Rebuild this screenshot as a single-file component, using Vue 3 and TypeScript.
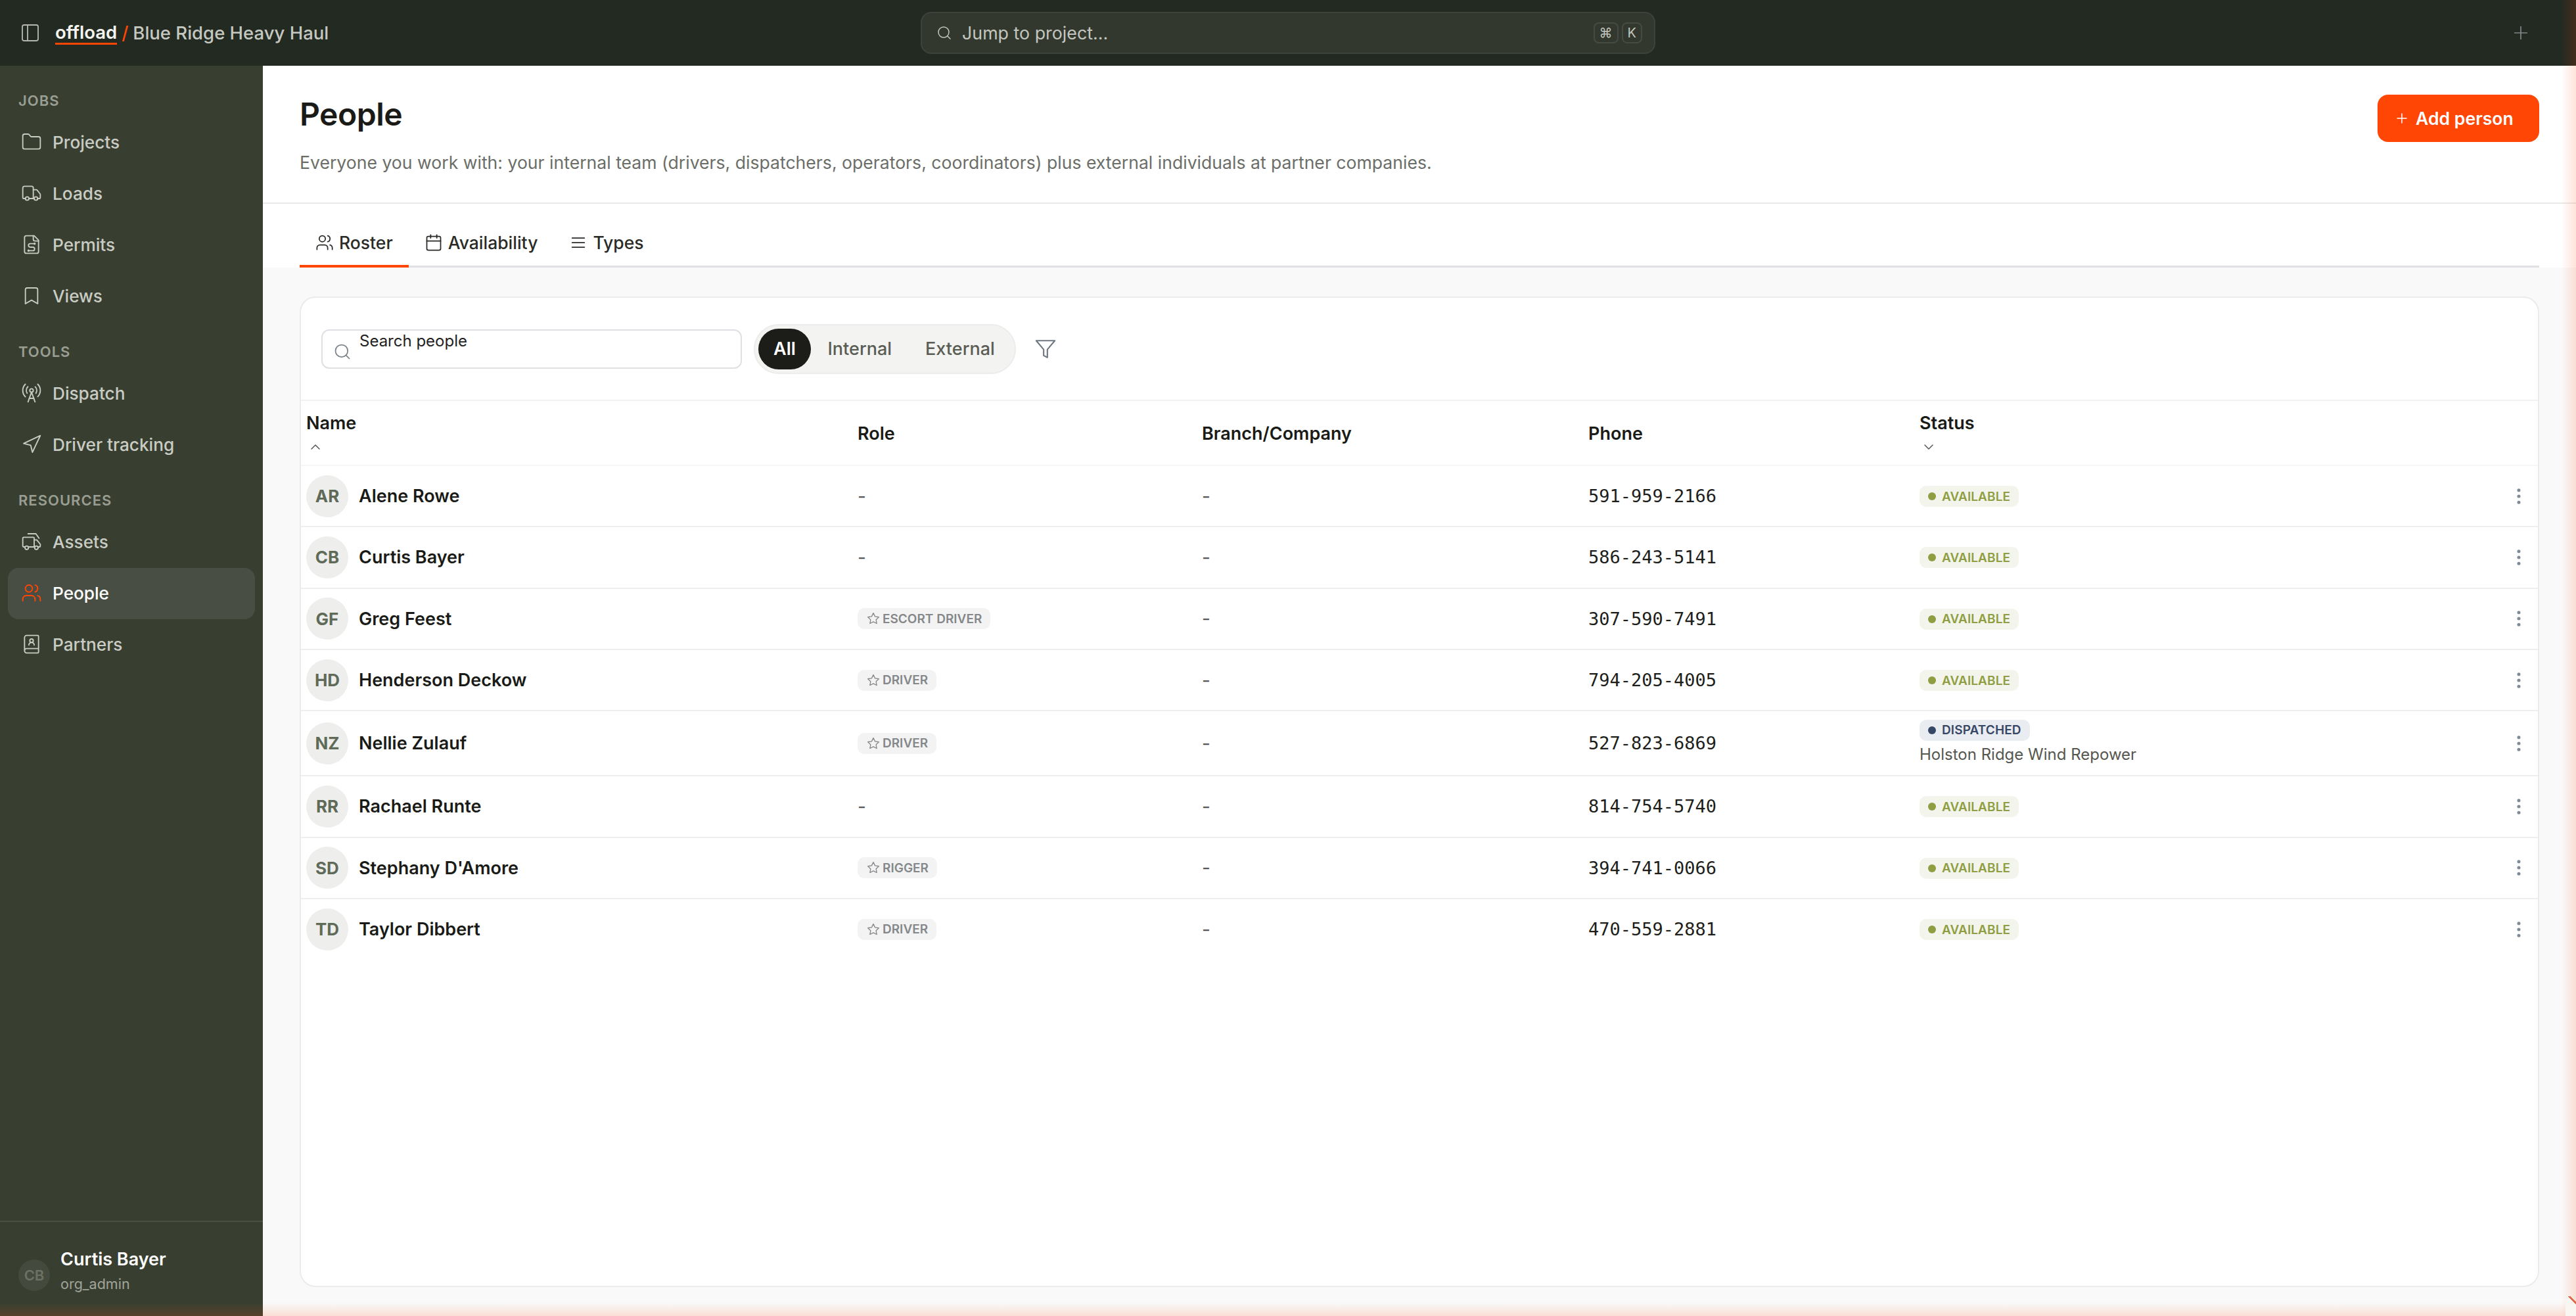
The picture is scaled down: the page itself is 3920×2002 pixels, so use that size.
<script setup lang="ts">
const circ = (cx: number, cy: number, r: number): string =>
  `M${cx - r} ${cy}a${r} ${r} 0 1 0 ${2 * r} 0a${r} ${r} 0 1 0 ${-2 * r} 0`

const icons: Record<string, string[]> = {
  panel: ['M5 3h14a2 2 0 0 1 2 2v14a2 2 0 0 1-2 2H5a2 2 0 0 1-2-2V5a2 2 0 0 1 2-2Z', 'M9 3v18'],
  folder: ['M20 20a2 2 0 0 0 2-2V8a2 2 0 0 0-2-2h-7.9a2 2 0 0 1-1.69-.9L9.6 3.9A2 2 0 0 0 7.93 3H4a2 2 0 0 0-2 2v13a2 2 0 0 0 2 2Z'],
  truck: ['M14 18V6a2 2 0 0 0-2-2H4a2 2 0 0 0-2 2v11a1 1 0 0 0 1 1h2', 'M15 18H9', 'M19 18h2a1 1 0 0 0 1-1v-3.65a1 1 0 0 0-.22-.624l-3.48-4.35A1 1 0 0 0 17.52 8H14', circ(17, 18, 2), circ(7, 18, 2)],
  permit: ['M15 2H6a2 2 0 0 0-2 2v16a2 2 0 0 0 2 2h12a2 2 0 0 0 2-2V7Z', 'M14 2v4a2 2 0 0 0 2 2h4', 'M15 11h-4.5a2 2 0 0 0 0 4h3a2 2 0 0 1 0 4H9', circ(15.5, 11, .6), circ(8.5, 19, .6)],
  bookmark: ['m19 21-7-4-7 4V5a2 2 0 0 1 2-2h10a2 2 0 0 1 2 2v16z'],
  tower: ['M4.9 16.1C1 12.2 1 5.8 4.9 1.9', 'M7.8 4.7a6.14 6.14 0 0 0-.8 7.5', circ(12, 9, 2), 'M16.2 4.8c2 2 2.26 5.11.8 7.47', 'M19.1 1.9a9.96 9.96 0 0 1 0 14.1', 'M9.5 18h5', 'm8 22 4-11 4 11'],
  nav: ['M3 11 22 2l-9 19-2-8-8-2Z'],
  asset: ['M4.5 18H3a1 1 0 0 1-1-1V8a1 1 0 0 1 1-1h11a1 1 0 0 1 1 1v10H9', 'M15 10h3l4 5v2a1 1 0 0 1-1 1h-1', 'M8 3h9l3.5 5', 'M15 18h.5', circ(6.5, 19, 2), circ(17.5, 19, 2)],
  users: ['M16 21v-2a4 4 0 0 0-4-4H6a4 4 0 0 0-4 4v2', circ(9, 7, 4), 'M22 21v-2a4 4 0 0 0-3-3.87', 'M16 3.13a4 4 0 0 1 0 7.75'],
  partner: ['M4 19.5v-15A2.5 2.5 0 0 1 6.5 2H19a1 1 0 0 1 1 1v18a1 1 0 0 1-1 1H6.5a1 1 0 0 1 0-5H20', circ(12, 8, 2), 'M15 13a3 3 0 1 0-6 0'],
  calendar: ['M8 2v4', 'M16 2v4', 'M5 4h14a2 2 0 0 1 2 2v14a2 2 0 0 1-2 2H5a2 2 0 0 1-2-2V6a2 2 0 0 1 2-2Z', 'M3 10h18'],
  menu: ['M4 6h16', 'M4 12h16', 'M4 18h16'],
  search: [circ(11, 11, 8), 'm21 21-4.3-4.3'],
  filter: ['M22 3H2l8 9.46V19l4 2v-8.54L22 3Z'],
  star: ['M12 2l3.09 6.26L22 9.27l-5 4.87 1.18 6.88L12 17.77l-6.18 3.25L7 14.14 2 9.27l6.91-1.01L12 2Z'],
  up: ['m18 15-6-6-6 6'],
  down: ['m6 9 6 6 6-6'],
  plus: ['M5 12h14', 'M12 5v14'],
  more: [circ(12, 5, 1), circ(12, 12, 1), circ(12, 19, 1)],
}

interface NavItem { label: string; icon: string; active?: boolean }
const groups: { title: string; items: NavItem[] }[] = [
  { title: 'JOBS', items: [
    { label: 'Projects', icon: 'folder' },
    { label: 'Loads', icon: 'truck' },
    { label: 'Permits', icon: 'permit' },
    { label: 'Views', icon: 'bookmark' },
  ] },
  { title: 'TOOLS', items: [
    { label: 'Dispatch', icon: 'tower' },
    { label: 'Driver tracking', icon: 'nav' },
  ] },
  { title: 'RESOURCES', items: [
    { label: 'Assets', icon: 'asset' },
    { label: 'People', icon: 'users', active: true },
    { label: 'Partners', icon: 'partner' },
  ] },
]

const tabs = [
  { label: 'Roster', icon: 'users', active: true },
  { label: 'Availability', icon: 'calendar' },
  { label: 'Types', icon: 'menu' },
]

interface Person { initials: string; name: string; role?: string; phone: string; project?: string }
const people: Person[] = [
  { initials: 'AR', name: 'Alene Rowe', phone: '591-959-2166' },
  { initials: 'CB', name: 'Curtis Bayer', phone: '586-243-5141' },
  { initials: 'GF', name: 'Greg Feest', role: 'ESCORT DRIVER', phone: '307-590-7491' },
  { initials: 'HD', name: 'Henderson Deckow', role: 'DRIVER', phone: '794-205-4005' },
  { initials: 'NZ', name: 'Nellie Zulauf', role: 'DRIVER', phone: '527-823-6869', project: 'Holston Ridge Wind Repower' },
  { initials: 'RR', name: 'Rachael Runte', phone: '814-754-5740' },
  { initials: 'SD', name: "Stephany D'Amore", role: 'RIGGER', phone: '394-741-0066' },
  { initials: 'TD', name: 'Taylor Dibbert', role: 'DRIVER', phone: '470-559-2881' },
]
</script>

<template>
  <div class="app">
    <header class="topbar">
      <div class="crumbs">
        <svg class="ic ic-panel" viewBox="0 0 24 24"><path v-for="d in icons.panel" :key="d" :d="d" /></svg>
        <span class="brand">offload</span>
        <span class="slash">/</span>
        <span class="org">Blue Ridge Heavy Haul</span>
      </div>
      <div class="jump">
        <svg class="ic ic-jump" viewBox="0 0 24 24"><path v-for="d in icons.search" :key="d" :d="d" /></svg>
        <span class="jump-text">Jump to project...</span>
        <span class="kbds"><kbd>⌘</kbd><kbd>K</kbd></span>
      </div>
      <svg class="ic ic-topplus" viewBox="0 0 24 24"><path v-for="d in icons.plus" :key="d" :d="d" /></svg>
    </header>

    <div class="body">
      <aside class="sidebar">
        <nav class="nav">
          <section v-for="g in groups" :key="g.title" class="group">
            <div class="group-title">{{ g.title }}</div>
            <a v-for="item in g.items" :key="item.label" class="nav-item" :class="{ active: item.active }">
              <svg class="ic ic-nav" viewBox="0 0 24 24"><path v-for="d in icons[item.icon]" :key="d" :d="d" /></svg>
              <span>{{ item.label }}</span>
            </a>
          </section>
        </nav>
        <div class="me">
          <div class="me-avatar">CB</div>
          <div class="me-text">
            <div class="me-name">Curtis Bayer</div>
            <div class="me-role">org_admin</div>
          </div>
        </div>
      </aside>

      <main class="main">
        <div class="head">
          <div class="head-text">
            <h1>People</h1>
            <p>Everyone you work with: your internal team (drivers, dispatchers, operators, coordinators) plus external individuals at partner companies.</p>
          </div>
          <button class="add">
            <svg class="ic ic-add" viewBox="0 0 24 24"><path v-for="d in icons.plus" :key="d" :d="d" /></svg>
            Add person
          </button>
        </div>

        <div class="tabs-wrap">
          <div class="tabs">
            <div v-for="t in tabs" :key="t.label" class="tab" :class="{ active: t.active }">
              <svg class="ic ic-tab" viewBox="0 0 24 24"><path v-for="d in icons[t.icon]" :key="d" :d="d" /></svg>
              <span>{{ t.label }}</span>
            </div>
          </div>
        </div>

        <div class="content">
          <div class="card">
            <div class="toolbar">
              <div class="search">
                <svg class="ic ic-search" viewBox="0 0 24 24"><path v-for="d in icons.search" :key="d" :d="d" /></svg>
                <span class="search-text">Search people</span>
              </div>
              <div class="seg">
                <span class="seg-btn on">All</span>
                <span class="seg-btn">Internal</span>
                <span class="seg-btn">External</span>
              </div>
              <svg class="ic ic-filter" viewBox="0 0 24 24"><path v-for="d in icons.filter" :key="d" :d="d" /></svg>
            </div>

            <div class="row thead">
              <div class="th">
                <span>Name</span>
                <svg class="ic ic-sort" viewBox="0 0 24 24"><path v-for="d in icons.up" :key="d" :d="d" /></svg>
              </div>
              <div class="th">Role</div>
              <div class="th">Branch/Company</div>
              <div class="th">Phone</div>
              <div class="th">
                <span>Status</span>
                <svg class="ic ic-sort" viewBox="0 0 24 24"><path v-for="d in icons.down" :key="d" :d="d" /></svg>
              </div>
            </div>

            <div v-for="p in people" :key="p.name" class="row person" :class="{ tall: p.project }">
              <div class="td cell-name">
                <div class="avatar">{{ p.initials }}</div>
                <span class="name">{{ p.name }}</span>
              </div>
              <div class="td">
                <span v-if="p.role" class="role">
                  <svg class="ic ic-star" viewBox="0 0 24 24"><path v-for="d in icons.star" :key="d" :d="d" /></svg>
                  {{ p.role }}
                </span>
                <span v-else class="dash">-</span>
              </div>
              <div class="td"><span class="dash">-</span></div>
              <div class="td phone">{{ p.phone }}</div>
              <div class="td cell-status">
                <div class="status-stack">
                  <span class="status" :class="p.project ? 'dispatched' : 'available'"><i class="dot"></i>{{ p.project ? 'DISPATCHED' : 'AVAILABLE' }}</span>
                  <span v-if="p.project" class="project">{{ p.project }}</span>
                </div>
                <svg class="ic ic-more" viewBox="0 0 24 24"><path v-for="d in icons.more" :key="d" :d="d" /></svg>
              </div>
            </div>
          </div>
        </div>
      </main>
    </div>

    <div class="glow glow-right"></div>
    <div class="glow glow-bottom"></div>
    <div class="corner"></div>
  </div>
</template>

<style scoped>
.app {
  position: relative;
  width: 3920px;
  height: 2002px;
  overflow: hidden;
  display: flex;
  flex-direction: column;
  font-family: Inter, "Liberation Sans", sans-serif;
  color: #1d1e1a;
  background: #f9f9f9;
}
.ic {
  fill: none;
  stroke: currentColor;
  stroke-width: 1.5;
  stroke-linecap: round;
  stroke-linejoin: round;
  flex: none;
}

/* top bar */
.topbar {
  height: 100px;
  flex: none;
  background: #232a21;
  display: grid;
  grid-template-columns: 1371px 1118px 1fr;
  align-items: center;
  padding: 0 72px 0 30px;
}
.crumbs {
  display: flex;
  align-items: center;
  font-size: 27.5px;
  font-weight: 500;
  color: #c5c8c1;
}
.ic-panel { width: 32px; height: 32px; color: #b3b7af; margin-right: 22px; stroke-width: 1.4; }
.brand {
  color: #f4f4f1;
  font-weight: 600;
  border-bottom: 3px solid #ff4605;
  line-height: 32px;
}
.slash { color: #ff4605; margin: 0 7px; }
.jump {
  height: 64px;
  box-sizing: border-box;
  display: flex;
  align-items: center;
  background: #32382e;
  border: 2px solid #3d433a;
  border-radius: 16px;
  padding: 0 18px 0 22px;
  color: #c3c6bf;
  font-size: 26.8px;
}
.ic-jump { width: 24px; height: 24px; margin-right: 15px; }
.jump-text { flex: 1; }
.kbds { display: flex; gap: 5px; }
kbd {
  font-family: Inter, "DejaVu Sans", sans-serif;
  font-size: 20px;
  height: 32px;
  min-width: 31px;
  padding: 0 7px;
  box-sizing: border-box;
  display: flex;
  align-items: center;
  justify-content: center;
  border: 2px solid #454b42;
  border-radius: 8px;
  color: #c3c6bf;
}
.ic-topplus { width: 32px; height: 32px; color: #80878a; justify-self: end; stroke-width: 1.3; margin-right: -4px; }

.body { flex: 1; display: flex; min-height: 0; }

/* sidebar */
.sidebar {
  width: 400px;
  flex: none;
  background: #393f30;
  display: flex;
  flex-direction: column;
}
.nav { flex: 1; padding: 38px 12px 0; display: flex; flex-direction: column; gap: 30px; }
.group-title {
  font-size: 22px;
  font-weight: 600;
  letter-spacing: 1px;
  line-height: 30px;
  padding-left: 16px;
  margin-bottom: 10px;
  color: #999e93;
}
.nav-item {
  height: 78px;
  box-sizing: border-box;
  display: flex;
  align-items: center;
  gap: 16px;
  padding: 0 0 2px 20px;
  border-radius: 16px;
  font-size: 26.2px;
  font-weight: 500;
  color: #c9ccc4;
}
.nav-item.active { background: #494e44; color: #fff; }
.nav-item.active .ic { color: #ff4605; }
.ic-nav { width: 32px; height: 32px; stroke-width: 1.4; }
.me {
  height: 145px;
  flex: none;
  box-sizing: border-box;
  border-top: 2px solid #4a4f41;
  display: flex;
  align-items: center;
  gap: 16px;
  padding: 6px 28px 0;
}
.me-avatar {
  width: 48px;
  height: 48px;
  border-radius: 50%;
  background: #444a3d;
  color: #6c7263;
  font-size: 22px;
  font-weight: 600;
  display: flex;
  align-items: center;
  justify-content: center;
  margin-top: 12px;
}
.me-name { font-size: 27px; font-weight: 600; color: #fff; line-height: 38px; }
.me-role { font-size: 21.5px; color: #a0a49b; line-height: 36px; }

/* main */
.main { flex: 1; min-width: 0; display: flex; flex-direction: column; background: #f9f9f9; }
.head {
  height: 210px;
  flex: none;
  box-sizing: border-box;
  background: #fff;
  border-bottom: 2px solid #e9e9e8;
  padding: 44px 56px 0;
  display: flex;
  justify-content: space-between;
  align-items: flex-start;
}
h1 { margin: 0; font-size: 48px; font-weight: 600; line-height: 60px; letter-spacing: -0.5px; color: #1a1b17; }
.head-text p { margin: 23px 0 0; font-size: 26.6px; line-height: 40px; color: #6b6e68; }
.add {
  height: 72px;
  width: 246px;
  box-sizing: border-box;
  border: 0;
  border-radius: 16px;
  background: #ff4605;
  color: #fff;
  font-family: inherit;
  font-size: 26.6px;
  font-weight: 600;
  display: flex;
  align-items: center;
  padding: 0 0 0 25px;
  gap: 9px;
}
.ic-add { width: 24px; height: 24px; }
.tabs-wrap { flex: none; height: 97px; background: #fff; padding: 0 56px; box-sizing: border-box; }
.tabs { height: 97px; box-sizing: border-box; border-bottom: 3px solid #dfe1e4; display: flex; }
.tab {
  height: 97px;
  box-sizing: border-box;
  padding: 25px 24px 0;
  border-bottom: 4px solid transparent;
  display: flex;
  align-items: center;
  gap: 8px;
  font-size: 26.5px;
  font-weight: 500;
  color: #2a2b26;
}
.tab.active { border-bottom-color: #ff4605; }
.ic-tab { width: 28px; height: 28px; }

.content { flex: 1; min-height: 0; padding: 44px 56px 44px; }
.card {
  height: 100%;
  box-sizing: border-box;
  background: #fff;
  border: 2px solid #ebebea;
  border-radius: 24px;
  overflow: hidden;
}
.toolbar {
  height: 157px;
  box-sizing: border-box;
  border-bottom: 2px solid #f1f1f0;
  display: flex;
  align-items: center;
  padding-left: 31px;
}
.search {
  width: 640px;
  height: 60px;
  box-sizing: border-box;
  border: 2px solid #dee0e4;
  border-radius: 12px;
  position: relative;
  display: flex;
  align-items: flex-start;
  padding-left: 56px;
}
.ic-search { position: absolute; left: 16px; top: 18px; width: 28px; height: 28px; color: #7a838a; }
.search-text { font-size: 24px; line-height: 32px; color: #222; }
.seg {
  margin-left: 18px;
  height: 76px;
  box-sizing: border-box;
  background: #f3f3f1;
  border: 2px solid #ececea;
  border-radius: 38px;
  padding: 5px;
  display: flex;
  align-items: center;
  font-size: 27px;
  font-weight: 500;
  color: #5a5d55;
}
.seg-btn { padding: 0 25.5px; height: 62px; display: flex; align-items: center; }
.seg-btn.on { background: #1c1c18; color: #fff; border-radius: 31px; font-weight: 600; padding: 0; width: 80px; box-sizing: border-box; justify-content: center; }
.ic-filter { width: 34px; height: 34px; margin-left: 28px; color: #6f7780; }

.row {
  display: grid;
  grid-template-columns: 839px 524px 588px 504px 1fr;
}
.thead { height: 97px; }
.th {
  padding: 1px 0 0 8px;
  font-size: 27px;
  font-weight: 600;
  color: #1a1b17;
  display: flex;
  flex-direction: column;
  justify-content: center;
  align-items: flex-start;
}
.ic-sort { width: 24px; height: 24px; margin: 8px 0 0 2px; color: #55585a; }
.person { height: 93.33px; box-sizing: border-box; border-top: 2px solid #eceef0; }
.person.tall { height: 99px; }
.thead + .person { border-top-color: #f6f6f5; }
.td { padding-left: 8px; display: flex; align-items: center; min-width: 0; }
.cell-name { gap: 16px; }
.avatar {
  width: 64px;
  height: 64px;
  flex: none;
  border-radius: 50%;
  background: #eeefed;
  color: #5f6b58;
  font-size: 26px;
  font-weight: 700;
  display: flex;
  align-items: center;
  justify-content: center;
}
.name { font-size: 27px; font-weight: 600; color: #1a1b17; }
.dash { font-size: 28px; color: #555; }
.role {
  height: 32px;
  box-sizing: border-box;
  background: #f3f3f3;
  border-radius: 10px;
  padding: 0 13px 0 14px;
  display: inline-flex;
  align-items: center;
  gap: 4px;
  font-size: 19px;
  font-weight: 600;
  color: #85888a;
}
.ic-star { width: 20px; height: 20px; stroke-width: 1.6; }
.phone { font-family: "DejaVu Sans Mono", monospace; font-size: 27px; color: #1d1e1a; }
.cell-status { justify-content: space-between; padding-right: 13px; }
.status-stack { display: flex; flex-direction: column; align-items: flex-start; padding-top: 1px; }
.status {
  height: 32px;
  box-sizing: border-box;
  border-radius: 10px;
  padding: 0 13px;
  display: inline-flex;
  align-items: center;
  gap: 9px;
  font-size: 19px;
  font-weight: 600;
  letter-spacing: 0.1px;
}
.tall .status-stack { padding-top: 2px; }
.dot { width: 12px; height: 12px; border-radius: 50%; background: currentColor; }
.available { background: #f3f5ec; color: #8f9e42; }
.dispatched { background: #e9ecf1; color: #374766; }
.project { font-size: 24px; line-height: 42px; color: #55574f; }
.ic-more { width: 32px; height: 32px; color: #808a94; stroke-width: 1.8; }

/* edge tint */
.glow { position: absolute; pointer-events: none; }
.glow-right { top: 0; right: 0; bottom: 0; width: 22px; background: linear-gradient(to right, rgba(255, 70, 5, 0), rgba(255, 70, 5, .15)); }
.glow-bottom { left: 0; right: 0; bottom: 0; height: 20px; background: linear-gradient(to bottom, rgba(255, 70, 5, 0), rgba(255, 70, 5, .15)); }
.corner {
  position: absolute;
  right: 0;
  bottom: 0;
  width: 16px;
  height: 30px;
  background: linear-gradient(45deg, #f9f6f2 0 72%, #e0694a 72% 82%, transparent 82%);
}
</style>

<style>
html, body { margin: 0; background: #f9f9f9; }
</style>
